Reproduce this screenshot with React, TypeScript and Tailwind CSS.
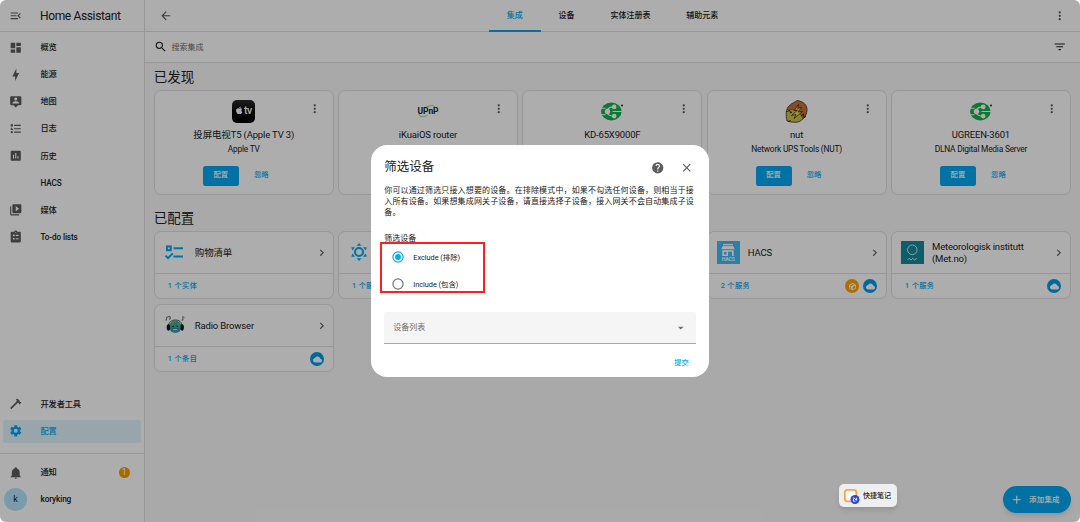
import { useState } from 'react';
import type { ReactNode } from 'react';
import { FaApple } from 'react-icons/fa';
import clsx from 'clsx';

const icons = {
  menuOpen: 'M21,15.61L19.59,17L14.58,12L19.59,7L21,8.39L17.44,12L21,15.61M3,6H16V8H3V6M3,13V11H13V13H3M3,18V16H16V18H3Z',
  back: 'M20,11V13H8L13.5,18.5L12.08,19.92L4.16,12L12.08,4.08L13.5,5.5L8,11H20Z',
  dashboard: 'M13,3V9H21V3M13,21H21V11H13M3,21H11V15H3M3,13H11V3H3V13Z',
  bolt: 'M11 15H6L13 1V9H18L11 23V15Z',
  map: 'M20,2H4A2,2 0 0,0 2,4V16A2,2 0 0,0 4,18H8L12,22L16,18H20A2,2 0 0,0 22,16V4A2,2 0 0,0 20,2M12,4.3C13.5,4.3 14.7,5.5 14.7,7C14.7,8.5 13.5,9.7 12,9.7C10.5,9.7 9.3,8.5 9.3,7C9.3,5.5 10.5,4.3 12,4.3M18,15H6V14.1C6,12.1 10,11 12,11C14,11 18,12.1 18,14.1V15Z',
  logbook: 'M5,9.5L7.5,14H2.5L5,9.5M3,4H7V8H3V4M5,20A2,2 0 0,0 7,18A2,2 0 0,0 5,16A2,2 0 0,0 3,18A2,2 0 0,0 5,20M9,5V7H21V5H9M9,19H21V17H9V19M9,13H21V11H9V13Z',
  history: 'M9 17H7V10H9V17M13 17H11V7H13V17M17 17H15V13H17V17M19 3H5A2,2 0 0,0 3,5V19A2,2 0 0,0 5,21H19A2,2 0 0,0 21,19V5A2,2 0 0,0 19,3Z',
  media: 'M4,6H2V20A2,2 0 0,0 4,22H18V20H4V6M20,2H8A2,2 0 0,0 6,4V16A2,2 0 0,0 8,18H20A2,2 0 0,0 22,16V4A2,2 0 0,0 20,2M12,14.5V5.5L18,10L12,14.5Z',
  todo: 'M19,3H14.82C14.4,1.84 13.3,1 12,1C10.7,1 9.6,1.84 9.18,3H5A2,2 0 0,0 3,5V20A2,2 0 0,0 5,22H19A2,2 0 0,0 21,20V5A2,2 0 0,0 19,3M12,3A1,1 0 0,1 13,4A1,1 0 0,1 12,5A1,1 0 0,1 11,4A1,1 0 0,1 12,3M7,8H10V11H7V8M12,8.5H17V10.5H12V8.5M7,14H10V17H7V14M12,14.5H17V16.5H12V14.5Z',
  hammer: 'M2,19.63L13.43,8.2L12.72,7.5L14.14,6.07L12,3.89C13.2,2.7 15.09,2.7 16.27,3.89L19.87,7.5L18.45,8.91H21.29L22,9.62L18.45,13.21L17.74,12.5V9.62L16.27,11.04L15.56,10.33L4.13,21.76L2,19.63Z',
  cog: 'M12,15.5A3.5,3.5 0 0,1 8.5,12A3.5,3.5 0 0,1 12,8.5A3.5,3.5 0 0,1 15.5,12A3.5,3.5 0 0,1 12,15.5M19.43,12.97C19.47,12.65 19.5,12.33 19.5,12C19.5,11.67 19.47,11.34 19.43,11L21.54,9.37C21.73,9.22 21.78,8.95 21.66,8.73L19.66,5.27C19.54,5.05 19.27,4.96 19.05,5.05L16.56,6.05C16.04,5.66 15.5,5.32 14.87,5.07L14.5,2.42C14.46,2.18 14.25,2 14,2H10C9.75,2 9.54,2.18 9.5,2.42L9.13,5.07C8.5,5.32 7.96,5.66 7.44,6.05L4.95,5.05C4.73,4.96 4.46,5.05 4.34,5.27L2.34,8.73C2.21,8.95 2.27,9.22 2.46,9.37L4.57,11C4.53,11.34 4.5,11.67 4.5,12C4.5,12.33 4.53,12.65 4.57,12.97L2.46,14.63C2.27,14.78 2.21,15.05 2.34,15.27L4.34,18.73C4.46,18.95 4.73,19.03 4.95,18.95L7.44,17.94C7.96,18.34 8.5,18.68 9.13,18.93L9.5,21.58C9.54,21.82 9.75,22 10,22H14C14.25,22 14.46,21.82 14.5,21.58L14.87,18.93C15.5,18.67 16.04,18.34 16.56,17.94L19.05,18.95C19.27,19.03 19.54,18.95 19.66,18.73L21.66,15.27C21.78,15.05 21.73,14.78 21.54,14.63L19.43,12.97Z',
  bell: 'M21,19V20H3V19L5,17V11C5,7.9 7.03,5.17 10,4.29C10,4.19 10,4.1 10,4A2,2 0 0,1 12,2A2,2 0 0,1 14,4C14,4.1 14,4.19 14,4.29C16.97,5.17 19,7.9 19,11V17L21,19M14,21A2,2 0 0,1 12,23A2,2 0 0,1 10,21',
  search: 'M9.5,3A6.5,6.5 0 0,1 16,9.5C16,11.11 15.41,12.59 14.44,13.73L14.71,14H15.5L20.5,19L19,20.5L14,15.5V14.71L13.73,14.44C12.59,15.41 11.11,16 9.5,16A6.5,6.5 0 0,1 3,9.5A6.5,6.5 0 0,1 9.5,3M9.5,5C7,5 5,7 5,9.5C5,12 7,14 9.5,14C12,14 14,12 14,9.5C14,7 12,5 9.5,5Z',
  filter: 'M6,13H18V11H6M3,6V8H21V6M10,18H14V16H10V18Z',
  dots: 'M12,16A2,2 0 0,1 14,18A2,2 0 0,1 12,20A2,2 0 0,1 10,18A2,2 0 0,1 12,16M12,10A2,2 0 0,1 14,12A2,2 0 0,1 12,14A2,2 0 0,1 10,12A2,2 0 0,1 12,10M12,4A2,2 0 0,1 14,6A2,2 0 0,1 12,8A2,2 0 0,1 10,6A2,2 0 0,1 12,4Z',
  chevron: 'M8.59,16.58L13.17,12L8.59,7.41L10,6L16,12L10,18L8.59,16.58Z',
  help: 'M15.07,11.25L14.17,12.17C13.45,12.89 13,13.5 13,15H11V14.5C11,13.39 11.45,12.39 12.17,11.67L13.41,10.41C13.78,10.05 14,9.55 14,9C14,7.89 13.1,7 12,7A2,2 0 0,0 10,9H8A4,4 0 0,1 12,5A4,4 0 0,1 16,9C16,9.88 15.64,10.67 15.07,11.25M13,19H11V17H13M12,2A10,10 0 0,0 2,12A10,10 0 0,0 12,22A10,10 0 0,0 22,12C22,6.47 17.5,2 12,2Z',
  close: 'M19,6.41L17.59,5L12,10.59L6.41,5L5,6.41L10.59,12L5,17.59L6.41,19L12,13.41L17.59,19L19,17.59L13.41,12L19,6.41Z',
  menuDown: 'M7,10L12,15L17,10H7Z',
  plus: 'M19,13H13V19H11V13H5V11H11V5H13V11H19V13Z',
  cloud: 'M19.35,10.03C18.67,6.59 15.64,4 12,4C9.11,4 6.6,5.64 5.35,8.03C2.34,8.36 0,10.9 0,14A6,6 0 0,0 6,20H19A5,5 0 0,0 24,15C24,12.36 21.95,10.22 19.35,10.03Z',
  box: 'M12,2L3,7V17L12,22L21,17V7L12,2M12,4.5L16,6.7L8.5,11L5,9L12,4.5M13,13L19,9.6V15.8L13,19.2V13M5,12L8,13.6V16.5L10,17.5V19L5,16V12Z',
};

const Icon = ({ name, className }: { name: keyof typeof icons; className?: string }) => (
  <svg viewBox="0 0 24 24" fill="currentColor" className={clsx('shrink-0', className ?? 'size-[13.5px]')}>
    <path d={icons[name]} fillRule="evenodd" />
  </svg>
);

const AppleTvLogo = () => (
  <div className="flex size-[23px] items-center justify-center rounded-[5px] bg-linear-to-b from-[#2b2b2b] to-black text-white">
    <FaApple className="mb-px size-[8.5px]" />
    <span className="text-[10.5px] leading-none font-medium tracking-[-0.3px]">tv</span>
  </div>
);

const UpnpLogo = () => (
  <div className="relative flex h-[23px] w-6 items-center justify-center">
    <svg viewBox="0 0 24 23" fill="none" stroke="#7cb55b" strokeWidth="0.7" className="absolute inset-0">
      <path d="M10 7.2C14 5.2 18.5 5 19.3 7.6M2.8 14C3.5 17.6 8 17.2 11.5 15.3" />
    </svg>
    <span className="text-[8.5px] leading-none font-bold tracking-[-0.1px] text-[#222]">UPnP</span>
  </div>
);

const DlnaLogo = () => (
  <svg viewBox="0 0 24 23" className="h-[23px] w-6">
    <ellipse cx="11.3" cy="11.5" rx="10.3" ry="9" fill="#12b24b" />
    <g stroke="#fff" strokeWidth="1.1" fill="none">
      <path d="M1 8.2H5.5M1 14.8H5.5M7 10C8.5 7.6 10.5 6.9 14 6.9M7 13C8.5 15.4 10.5 16.1 14 16.1M12.5 11.5H22" />
    </g>
    <g fill="#fff">
      <circle cx="14.2" cy="6.9" r="2.3" />
      <circle cx="7.5" cy="11.5" r="2.7" />
      <circle cx="14.2" cy="16.1" r="2.3" />
    </g>
    <circle cx="22" cy="5.5" r="1" fill="#222" />
  </svg>
);

const NutLogo = () => (
  <svg viewBox="0 0 23 23" className="size-[23px]">
    <path d="M2 21C.6 15 .8 9 4 6C7 3 10 2.5 12 .7C17 1 21 4 21.8 8C22.6 14 19 20 13 22C9 22.6 5 22 2 21Z" fill="#cfc24c" stroke="#3a2a1a" strokeWidth="0.8" />
    <path d="M4 6C7 3 10 2.5 12 .7C17 1 21 4 21.8 8C22.4 12 21 16 18 19C16 13 11 9 2.5 9.5C2.5 8 3 7 4 6Z" fill="#c5713b" stroke="#3a2a1a" strokeWidth="0.4" />
    <path d="M13.5 4.5L9 10.5L12.5 10L6.5 15.5L11 14.5L9 18.5L17.5 11.5L13 12L16.5 7.5L12.8 8.3Z" fill="#f6d743" stroke="#2a1c12" strokeWidth="0.7" />
    <path d="M1.5 11.5L5 10.5L5.5 13L7 12M16 16L18.5 14L19 17.5L21 16.5M3 21.5L5.5 20.5" fill="none" stroke="#2a1c12" strokeWidth="0.9" />
  </svg>
);

const ShoppingLogo = () => (
  <svg viewBox="0 0 23 23" fill="none" stroke="#03a9f4" strokeWidth="2" className="size-[23px]">
    <rect x="3" y="5.4" width="3.8" height="3.8" />
    <path d="M9.5 7.3H19M9.5 15.6H19M1.5 14.6L4 17.1L8.8 12.4" />
  </svg>
);

const SunLogo = () => (
  <svg viewBox="0 0 24 24" className="size-[23px]">
    <circle cx="11.5" cy="11.5" r="4.2" fill="none" stroke="#03a9f4" strokeWidth="2.1" />
    <g fill="#03a9f4">
      <path d="M11.5 2.2L14 5H9ZM11.5 20.8L14 18H9Z" />
      <path d="M3.3 6.9L7 6.3L4.9 10ZM19.7 6.9L16 6.3L18.1 10ZM3.3 16.1L7 16.7L4.9 13ZM19.7 16.1L16 16.7L18.1 13Z" />
    </g>
  </svg>
);

const RadioLogo = () => (
  <svg viewBox="0 0 23 23" className="size-[23px]">
    <circle cx="11.3" cy="12.8" r="6.2" fill="#2b9fd0" />
    <path d="M6.5 9.5C7.5 7.3 11 6.4 13 6.8L12 9L10 9.3L9 11.5L6.5 11.5ZM14 8.5L16.5 9.5L17 13L15 14.5L13.5 12ZM7.5 15.5L10 17.2L12 18.8L9 18.3Z" fill="#52c23c" />
    <path d="M4.6 11.8C4.6 8 7.6 6 11.3 6S18 8 18 11.8" fill="none" stroke="#444" strokeWidth="0.9" />
    <path d="M3.6 10.6C5 10 5.8 10.5 6.1 12V15C5.3 17.4 3.8 17 3 15.4C2.4 13.5 2.6 11.7 3.6 10.6ZM19 10.6C17.6 10 16.8 10.5 16.5 12V15C17.3 17.4 18.8 17 19.6 15.4C20.2 13.5 20 11.7 19 10.6Z" fill="#151515" />
    <path d="M8 14.7C9.5 17.2 13 17.2 14.5 14.7Z" fill="#fff" stroke="#222" strokeWidth="0.5" />
    <path d="M8.3 12.6L10 12M12.6 12L14.3 12.6" stroke="#112" strokeWidth="0.9" />
    <path d="M2.6 5.6V3.2L6.2 2.4V4.8M18.9 6V2.4L20.3 3.8M1.3 6H2.9M5 5.1H6.5M17.6 6.2H19.1" stroke="#333" strokeWidth="0.7" fill="none" />
  </svg>
);

const HacsLogo = () => (
  <div className="flex size-[23px] flex-col items-center bg-[#41bdf5] pt-[3px] text-white">
    <svg viewBox="0 0 14 12" className="h-3 w-3.5">
      <path d="M2 0H12V1.3H2ZM1.8 2H12.2L13.8 5.2H.2ZM1.3 6.3H12.7V12H11V7.8H7V12H1.3ZM3 8V10.5H5.5V8Z" fill="#fff" fillRule="evenodd" />
    </svg>
    <span className="text-[5px] leading-[6px] font-bold tracking-[-0.1px]">HACS</span>
  </div>
);

const MetLogo = () => (
  <svg viewBox="0 0 23 23" className="size-[23px]">
    <rect width="23" height="23" fill="#148a9c" />
    <g stroke="#fff" fill="none" strokeWidth="0.8">
      <circle cx="11.3" cy="8.8" r="4.8" />
      <path d="M6.5 19L8.2 17.3L10 19L11.8 17.3L13.6 19L15.8 17.3" />
    </g>
  </svg>
);

const mainNav = [
  { icon: 'dashboard', label: '概览' },
  { icon: 'bolt', label: '能源' },
  { icon: 'map', label: '地图' },
  { icon: 'logbook', label: '日志' },
  { icon: 'history', label: '历史' },
  { icon: null, label: 'HACS' },
  { icon: 'media', label: '媒体' },
  { icon: 'todo', label: 'To-do lists' },
] as const;

const tabs = ['集成', '设备', '实体注册表', '辅助元素'];

const discovered = [
  { id: 1, title: '投屏电视T5 (Apple TV 3)', subtitle: 'Apple TV', logo: <AppleTvLogo /> },
  { id: 2, title: 'iKuaiOS router', subtitle: '', logo: <UpnpLogo /> },
  { id: 3, title: 'KD-65X9000F', subtitle: '', logo: <DlnaLogo /> },
  { id: 4, title: 'nut', subtitle: 'Network UPS Tools (NUT)', logo: <NutLogo /> },
  { id: 5, title: 'UGREEN-3601', subtitle: 'DLNA Digital Media Server', logo: <DlnaLogo /> },
];

const configured = [
  { id: 1, title: '购物清单', count: '1 个实体', logo: <ShoppingLogo />, custom: false, cloud: false },
  { id: 2, title: '', count: '1 个服务', logo: <SunLogo />, custom: false, cloud: false },
  { id: 3, title: '', count: '', logo: null, custom: false, cloud: false },
  { id: 4, title: 'HACS', count: '2 个服务', logo: <HacsLogo />, custom: true, cloud: true },
  { id: 5, title: 'Meteorologisk institutt (Met.no)', count: '1 个服务', logo: <MetLogo />, custom: false, cloud: true },
  { id: 6, title: 'Radio Browser', count: '1 个条目', logo: <RadioLogo />, custom: false, cloud: true },
];

const NavItem = ({ icon, label, active, children }: { icon: keyof typeof icons | null; label: string; active?: boolean; children?: ReactNode }) => (
  <div
    className={clsx(
      'mx-[3px] mb-[4.5px] flex h-[22.6px] items-center rounded-[2.5px] pl-1.5',
      active ? 'bg-[#03a9f4]/12 text-[#03a9f4]' : 'text-[#212121]',
    )}
  >
    <span className={clsx('w-[31.5px]', !active && 'text-[#5c5c5c]')}>{icon && <Icon name={icon} />}</span>
    <span className="flex-1 text-[8.2px] font-medium tracking-[-0.12px]">{label}</span>
    {children}
  </div>
);

const Sidebar = () => (
  <aside className="flex w-[145px] shrink-0 flex-col border-r border-[#e0e0e0] bg-white">
    <div className="flex h-8 items-center border-b border-[#e0e0e0] pl-[9px] text-[#5c5c5c]">
      <Icon name="menuOpen" />
      <span className="ml-[17.5px] text-[12px] tracking-[-0.36px] text-[#212121]">Home Assistant</span>
    </div>
    <nav className="flex flex-1 flex-col pt-1">
      {mainNav.map((item) => (
        <NavItem key={item.label} icon={item.icon} label={item.label} />
      ))}
      <div className="mt-auto">
        <NavItem icon="hammer" label="开发者工具" />
        <NavItem icon="cog" label="配置" active />
      </div>
    </nav>
    <div className="mt-[6px] h-[69px] border-t border-[#e0e0e0] pt-[7px]">
      <NavItem icon="bell" label="通知">
        <span className="mr-[11px] flex size-[11.5px] items-center justify-center rounded-full bg-[#ff9800] text-[8.5px] leading-none text-white">1</span>
      </NavItem>
      <div className="flex items-center pl-1 text-[#212121]">
        <span className="flex size-[23px] items-center justify-center rounded-full bg-[#b3e5fc] text-[9px]">k</span>
        <span className="ml-[13.5px] text-[8.3px] font-medium tracking-[-0.15px]">koryking</span>
      </div>
    </div>
  </aside>
);

const DiscoveredCard = ({ title, subtitle, logo }: (typeof discovered)[0]) => (
  <div className="relative flex h-[105px] flex-col items-center rounded-[7px] border border-[#e0e0e0] bg-white pt-[9px]">
    <Icon name="dots" className="absolute top-[11px] right-[11px] size-[13.5px] text-[#5c5c5c]" />
    <div className="flex h-[23px] items-center">{logo}</div>
    <div className="mt-[5px] text-[9.5px] leading-[14px] tracking-[-0.16px] text-[#212121]">{title}</div>
    {subtitle && (
      <>
        <div className="mt-px text-[8.4px] leading-[13px] tracking-[-0.22px] text-[#212121]">{subtitle}</div>
        <div className="mt-[10px] flex pr-px">
          <button className="h-[20.5px] w-9 rounded-[2.5px] bg-[#03a9f4] text-[7.3px] font-medium text-white">配置</button>
          <button className="w-[45px] text-[7.3px] font-medium text-[#03a9f4]">忽略</button>
        </div>
      </>
    )}
  </div>
);

const ConfiguredCard = ({ title, count, logo, custom, cloud }: (typeof configured)[0]) => (
  <div className="flex h-[68.3px] flex-col rounded-[7px] border border-[#e0e0e0] bg-white">
    <div className="flex h-[41px] items-center pr-[4.5px] pl-[9px]">
      <span className="w-[23px]">{logo}</span>
      <span className="ml-2 flex-1 text-[9.5px] leading-[11.3px] tracking-[-0.16px] text-[#212121]">{title}</span>
      <Icon name="chevron" className="size-[13.5px] text-[#5c5c5c]" />
    </div>
    <div className="flex flex-1 items-center border-t border-[#e0e0e0] pr-[8.5px] pl-[13px]">
      <span className="flex-1 pt-px text-[7.2px] font-medium tracking-[0.4px] text-[#03a9f4]">{count}</span>
      {custom && (
        <span className="mr-1 flex size-3.5 items-center justify-center rounded-full bg-[#ffa600] text-white">
          <Icon name="box" className="size-[9px]" />
        </span>
      )}
      {cloud && (
        <span className="flex size-3.5 items-center justify-center rounded-full bg-[#039be5] text-white">
          <Icon name="cloud" className="size-[9px]" />
        </span>
      )}
    </div>
  </div>
);

const Radio = ({ checked, label, onSelect }: { checked: boolean; label: string; onSelect: () => void }) => (
  <button onClick={onSelect} className="flex h-[27px] items-center pl-[7.5px]">
    <svg viewBox="0 0 12 12" className={clsx('size-3', checked ? 'text-[#03a9f4]' : 'text-[#757575]')}>
      <circle cx="6" cy="6" r="5.1" fill="none" stroke="currentColor" strokeWidth="1.2" />
      {checked && <circle cx="6" cy="6" r="2.9" fill="currentColor" />}
    </svg>
    <span className="ml-[9.5px] text-[7.4px] tracking-[-0.05px] text-[#212121]">{label}</span>
  </button>
);

const FilterDialog = () => {
  const [mode, setMode] = useState('exclude');

  return (
    <div className="relative flex h-[232.5px] w-[338.5px] flex-col rounded-2xl bg-white px-[13.5px] text-[#212121]">
      <div className="flex h-10 items-center pt-[3px]">
        <h2 className="flex-1 pt-0.5 text-[12.5px]">筛选设备</h2>
        <Icon name="help" className="mt-[3px] size-[13.5px] text-[#5c5c5c]" />
        <Icon name="close" className="mt-[3px] mr-[2.5px] ml-[15.5px] size-[13.5px] text-[#5c5c5c]" />
      </div>
      <p className="mr-[-3px] w-[314px] text-[8px] leading-[11.3px] tracking-[0.15px]">
        你可以通过筛选只接入想要的设备。在排除模式中，如果不勾选任何设备，则相当于接入所有设备。如果想集成网关子设备，请直接选择子设备，接入网关不会自动集成子设备。
      </p>
      <div className="mt-[13.5px] text-[8px] leading-[13px]">筛选设备</div>
      <div className="-mt-[1.5px] flex flex-col items-start">
        <Radio checked={mode === 'exclude'} label="Exclude (排除)" onSelect={() => setMode('exclude')} />
        <Radio checked={mode === 'include'} label="Include (包含)" onSelect={() => setMode('include')} />
      </div>
      {/* Highlight around the two modes */}
      <div className="pointer-events-none absolute top-[97.5px] left-[9.5px] h-[51px] w-[105px] border-2 border-[#ff1f1f]" />
      <div className="mt-[14.5px] flex h-8 items-center rounded-t-[2.5px] border-b border-[#a8a8a8] bg-[#f5f5f5] pr-2 pl-[9px] text-[#6e6e6e]">
        <span className="flex-1 text-[8px]">设备列表</span>
        <Icon name="menuDown" />
      </div>
      <button className="mt-3 mr-[7px] self-end text-[7.3px] leading-[13px] font-medium text-[#03a9f4]">提交</button>
    </div>
  );
};

export default function App() {
  const [tab, setTab] = useState('集成');

  return (
    <div className="relative flex h-[522px] w-[1080px] overflow-hidden rounded-md bg-[#fafafa] font-[Roboto,'Noto_Sans_CJK_SC',sans-serif]">
      <Sidebar />
      <main className="flex min-w-0 flex-1 flex-col">
        <header className="flex h-8 shrink-0 items-center border-b border-[#e0e0e0] bg-white pr-[13.5px] pl-[13.5px] text-[#5c5c5c]">
          <Icon name="back" />
          <div className="flex h-8 flex-1 justify-center">
            {tabs.map((item) => (
              <button
                key={item}
                onClick={() => setTab(item)}
                className={clsx(
                  'h-8 border-b-2 px-[17.9px] pt-0.5 text-[8px] font-medium',
                  tab === item ? 'border-[#03a9f4] text-[#03a9f4]' : 'border-transparent text-[#212121]',
                )}
              >
                {item}
              </button>
            ))}
          </div>
          <Icon name="dots" />
        </header>
        <div className="flex h-[31px] shrink-0 items-center border-b border-[#e0e0e0] bg-white pr-[13.5px] pl-[9px] text-[#212121]">
          <Icon name="search" />
          <span className="ml-1 flex-1 pt-px text-[8px] text-[#727272]">搜索集成</span>
          <Icon name="filter" />
        </div>

        <div className="flex-1 pr-[9.2px] pl-[8.8px] text-[#212121]">
          <h1 className="pt-1 text-[13.5px] leading-5">已发现</h1>
          <div className="mt-[2.7px] grid grid-cols-5 gap-[4.5px]">
            {discovered.map((item) => (
              <DiscoveredCard key={item.id} {...item} />
            ))}
          </div>
          <h1 className="mt-[13px] text-[13.5px] leading-5">已配置</h1>
          <div className="mt-[3.4px] grid grid-cols-5 gap-[4.5px]">
            {configured.map((item) => (
              <ConfiguredCard key={item.id} {...item} />
            ))}
          </div>
        </div>
      </main>

      <button className="absolute right-[9px] bottom-[9px] flex h-[27px] w-[68px] items-center rounded-full bg-[#03a9f4] pl-[7px] text-white shadow-md">
        <Icon name="plus" />
        <span className="ml-[5.5px] pt-px text-[7.4px] font-medium tracking-[0.3px]">添加集成</span>
      </button>

      <div className="absolute inset-0 flex items-center justify-center bg-black/32">
        <FilterDialog />
      </div>

      <div className="absolute top-[484px] left-[839px] flex h-[23px] w-[58px] items-center rounded-[5px] bg-[#efefef] pl-1 shadow-md">
        <svg viewBox="0 0 17 17" className="size-[17px]">
          <rect x="1.8" y="2.8" width="11.5" height="11.5" rx="2.5" fill="#fff" stroke="#ffa143" strokeWidth="1.8" />
          <circle cx="12" cy="12.5" r="4.5" fill="#2b49e0" />
          <path d="M10.4 10.5L13.6 13.3V10.8M10.4 11.5V14.2H12.5" fill="none" stroke="#fff" strokeWidth="0.9" />
        </svg>
        <span className="ml-[3px] pt-0.5 text-[7px] font-medium text-[#222]">快捷笔记</span>
      </div>
    </div>
  );
}
